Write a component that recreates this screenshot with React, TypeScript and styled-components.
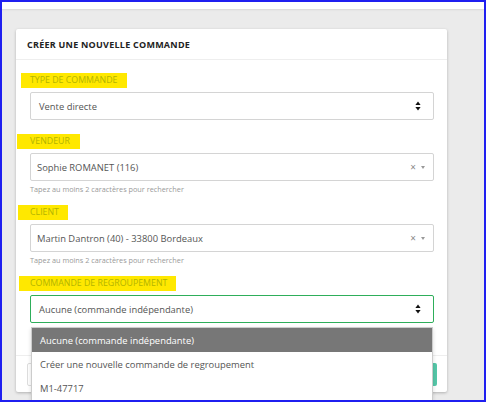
import React from 'react';
import styled, { createGlobalStyle } from 'styled-components';

const GlobalStyle = createGlobalStyle`
  html, body {
    margin: 0;
    padding: 0;
    background: #ebebeb;
  }
  * {
    box-sizing: border-box;
  }
`;

const Frame = styled.div`
  width: 486px;
  height: 402px;
  border: 2px solid #1f1ff0;
  background: #ebebeb;
  overflow: hidden;
  font-family: 'Open Sans', 'Noto Sans', sans-serif;
  display: flex;
  flex-direction: column;
`;

const TopBar = styled.div`
  height: 7px;
  background: #fff;
  box-shadow: 0 1px 2px rgba(0, 0, 0, 0.08);
  flex-shrink: 0;
`;

const Page = styled.div`
  padding: 20px 0 0 14px;
`;

const Card = styled.div`
  position: relative;
  width: 431px;
  height: 363px;
  background: #fff;
  border-radius: 2px;
  box-shadow: 0 1px 3px rgba(0, 0, 0, 0.25);
  display: flex;
  flex-direction: column;
`;

const CardHeader = styled.div`
  height: 31px;
  padding: 0 11px;
  display: flex;
  align-items: center;
  border-bottom: 1px solid #eee;
  font-size: 9px;
  font-weight: 700;
  letter-spacing: 0.25px;
  color: #222;
`;

const CardBody = styled.div`
  padding: 13px 13px 0 14px;
  display: flex;
  flex-direction: column;
`;

const Field = styled.div<{ $gap: number }>`
  display: flex;
  flex-direction: column;
  margin-bottom: ${(p) => p.$gap}px;
`;

const Label = styled.div<{ $shift: number; $extra: number }>`
  align-self: flex-start;
  height: 15px;
  line-height: 15px;
  margin-left: -${(p) => p.$shift}px;
  padding: 0 ${(p) => p.$extra}px 0 ${(p) => p.$shift}px;
  margin-bottom: 4px;
  background: #ffe800;
  color: #b3b400;
  font-size: 8.8px;
  text-transform: uppercase;
`;

const SelectBox = styled.div<{ $focus?: boolean; $pad: number }>`
  height: 28px;
  border: 1px solid ${(p) => (p.$focus ? '#2eae5a' : '#d4d4d4')};
  border-radius: 2px;
  padding: 0 12px 0 ${(p) => p.$pad}px;
  display: flex;
  align-items: center;
  justify-content: space-between;
  font-size: 9.4px;
  color: #555;
`;

const Controls = styled.div`
  display: flex;
  align-items: center;
  gap: 5px;
  margin-right: -4px;
`;

const Clear = styled.span`
  font-size: 10px;
  line-height: 1;
  color: #888;
`;

const Caret = styled.span`
  width: 0;
  height: 0;
  border-left: 2.5px solid transparent;
  border-right: 2.5px solid transparent;
  border-top: 3px solid #999;
`;

const Help = styled.div`
  margin-top: 3px;
  font-size: 7.3px;
  line-height: 10px;
  color: #999;
`;

const CardFooter = styled.div`
  margin-top: auto;
  height: 37px;
  border-top: 1px solid #eee;
  padding: 7px 10px 6px 11px;
  display: flex;
  justify-content: space-between;
`;

const GhostButton = styled.div`
  width: 90px;
  border: 1px solid #ddd;
  border-radius: 2px;
`;

const TealButton = styled.div`
  width: 90px;
  background: #55c7a8;
  border-radius: 2px;
`;

const Dropdown = styled.ul`
  position: absolute;
  left: 15px;
  top: 298px;
  width: 402px;
  margin: 0;
  padding: 0;
  list-style: none;
  background: #fff;
  border: 1px solid #ccc;
  border-bottom: none;
  box-shadow: 0 2px 4px rgba(0, 0, 0, 0.15);
`;

const Option = styled.li<{ $active?: boolean }>`
  height: 24px;
  padding-left: 8px;
  display: flex;
  align-items: center;
  font-size: 9.4px;
  background: ${(p) => (p.$active ? '#777' : '#fff')};
  color: ${(p) => (p.$active ? '#fff' : '#555')};
`;

function SortIcon() {
  return (
    <svg width='6' height='10' viewBox='0 0 6 10'>
      <path d='M3 0.5 L5.6 4 H0.4 Z' fill='#111' />
      <path d='M3 9.5 L5.6 6 H0.4 Z' fill='#111' />
    </svg>
  );
}

function SearchControls() {
  return (
    <Controls>
      <Clear>×</Clear>
      <Caret />
    </Controls>
  );
}

export default function App() {
  return (
    <>
      <GlobalStyle />
      <Frame>
        <TopBar />
        <Page>
          <Card>
            <CardHeader>CRÉER UNE NOUVELLE COMMANDE</CardHeader>
            <CardBody>
              <Field $gap={14}>
                <Label $shift={9} $extra={10}>
                  Type de commande
                </Label>
                <SelectBox $pad={8}>
                  Vente directe
                  <SortIcon />
                </SelectBox>
              </Field>
              <Field $gap={11}>
                <Label $shift={13} $extra={10}>
                  Vendeur
                </Label>
                <SelectBox $pad={6}>
                  Sophie ROMANET (116)
                  <SearchControls />
                </SelectBox>
                <Help>Tapez au moins 2 caractères pour rechercher</Help>
              </Field>
              <Field $gap={11}>
                <Label $shift={12} $extra={9}>
                  Client
                </Label>
                <SelectBox $pad={6}>
                  Martin Dantron (40) - 33800 Bordeaux
                  <SearchControls />
                </SelectBox>
                <Help>Tapez au moins 2 caractères pour rechercher</Help>
              </Field>
              <Field $gap={0}>
                <Label $shift={11} $extra={9}>
                  Commande de regroupement
                </Label>
                <SelectBox $pad={8} $focus>
                  Aucune (commande indépendante)
                  <SortIcon />
                </SelectBox>
              </Field>
            </CardBody>
            <CardFooter>
              <GhostButton />
              <TealButton />
            </CardFooter>
            <Dropdown>
              <Option $active>Aucune (commande indépendante)</Option>
              <Option>Créer une nouvelle commande de regroupement</Option>
              <Option>M1-47717</Option>
            </Dropdown>
          </Card>
        </Page>
      </Frame>
    </>
  );
}
